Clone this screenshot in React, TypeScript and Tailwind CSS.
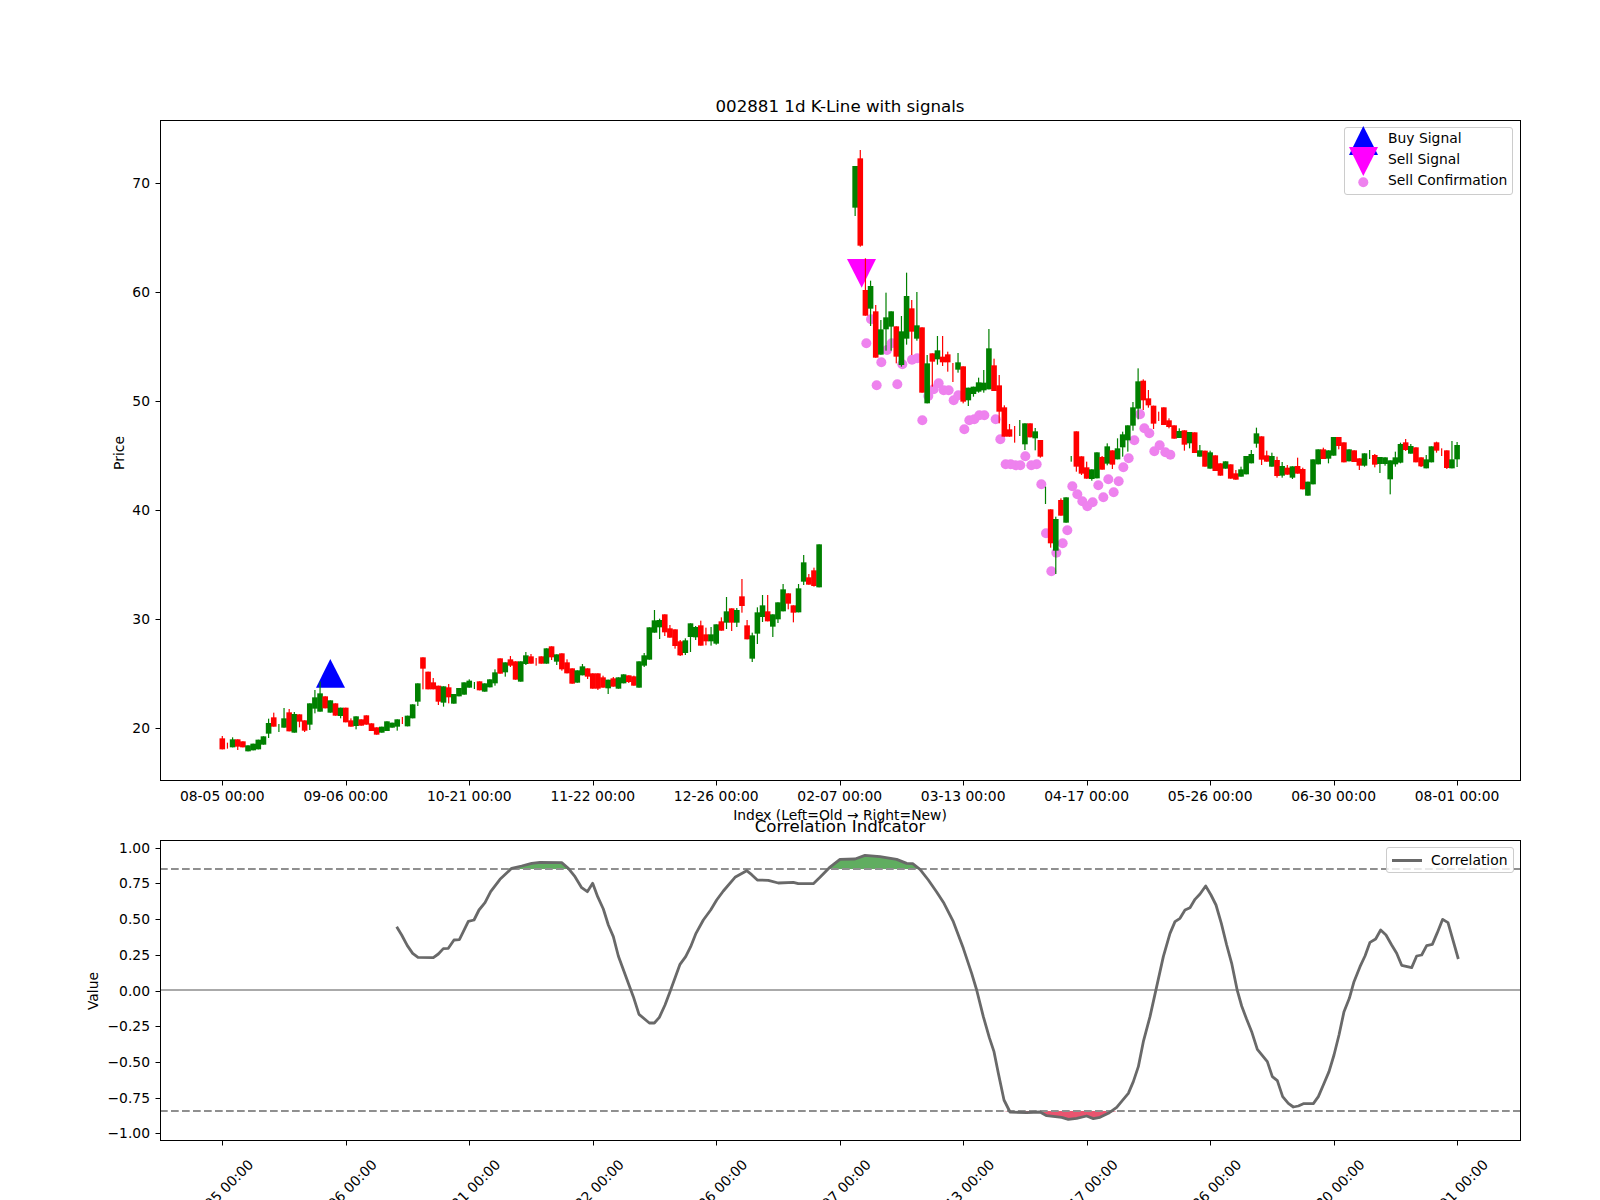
import React from 'react';

type Row = [string, number, number, number, number];

// candle rows read off the chart: colour, wick top, body top, body bottom, wick bottom
const sectionA: Row[] = [
  ['r',348,355,388,388],['r',368,377,377,386],['g',352,358,382,382],['r',358,358,380,390],['r',364,364,382,382],['g',376,376,394,394],['g',371,371,391,391],['g',359,359,388,388],['g',349,349,374,374],['g',296,309,341,354],
  ['r',278,292,320,320],['g',312,324,324,336],['g',264,295,323,323],['r',267,277,334,334],['g',276,282,338,338],['r',283,283,305,322],['r',301,301,332,336],['g',250,250,314,330],['g',210,232,266,280],['g',185,220,275,275],
  ['r',229,229,265,265],['g',241,241,278,278],['r',250,250,287,287],['g',263,263,288,295],['r',263,263,307,307],['r',295,301,320,320],['g',289,289,318,328],['r',298,298,317,317],['r',286,286,314,314],['r',310,310,333,333],
  ['r',322,322,344,344],['g',320,320,338,338],['g',304,304,333,333],['g',308,308,323,323],['g',298,298,320,332],['r',291,301,301,312],['g',287,287,319,319],['g',253,253,295,295],['g',190,190,245,258],['r',112,112,146,208],
  ['r',155,155,208,208],['r',174,187,208,208],['r',197,197,245,255],['g',199,199,248,260],['r',192,202,232,250],['g',222,222,251,251],['g',204,204,229,229],['g',187,187,224,224],['g',178,182,203,203],['g',186,196,196,207],
  ['r',184,184,211,211],
];
const sectionB: Row[] = [
  ['g',460,460,485,485],['g',448,448,472,472],['g',418,427,460,467],['r',385,385,431,431],['g',397,397,427,440],['r',378,388,407,411],['r',394,394,449,449],['g',394,394,455,455],['g',366,376,402,405],['r',372,379,401,401],
  ['r',384,395,395,407],['r',379,379,401,401],['g',355,355,401,401],['r',349,349,382,390],['g',373,373,395,405],['r',370,370,418,422],['r',388,397,430,430],['r',415,415,461,461],['g',421,421,458,458],['g',402,409,436,436],
  ['r',415,415,440,447],['r',430,430,476,476],['r',430,430,476,480],['r',437,442,473,473],['g',449,449,475,492],['r',441,445,470,470],['g',442,442,476,476],['g',433,433,460,460],['r',436,436,456,459],['r',437,439,467,467],
  ['g',394,394,473,473],['g',369,376,407,411],['g',292,292,389,389],['g',240,271,308,308],['g',266,270,292,327],['r',253,253,307,318],['r',285,295,323,323],['r',298,298,348,356],['r',330,334,376,378],['g',325,331,369,375],
  ['g',280,280,321,366],['g',288,291,322,330],['r',272,286,347,347],['r',293,313,334,346],['g',291,313,334,347],['g',283,283,341,344],['r',262,274,302,302],['g',201,244,278,297],['r',235,235,278,303],['g',234,240,278,291],
  ['r',147,199,228,248],['r',270,286,328,328],['g',308,316,386,396],['g',232,247,311,342],['g',195,226,261,276],['r',195,244,274,274],['g',253,253,290,321],['g',217,217,268,279],['g',162,178,244,244],['r',190,190,221,238],
  ['r',226,226,248,277],['g',162,175,247,247],['g',75,97,155,165],['r',132,142,164,164],['r',113,121,168,170],['g',43,43,172,172],
];
const sectionC: Row[] = [
  ['g',108,108,233,258],['r',60,85,347,350],['r',385,480,557,557],['g',452,468,536,588],['r',525,544,683,683],['g',570,598,674,674],['g',488,562,598,662],['g',544,544,590,662],['r',589,589,680,700],['g',558,604,705,710],
  ['g',428,498,626,644],['r',510,535,605,675],['g',486,586,626,632],['r',592,592,788,788],['g',675,700,820,820],['r',670,670,695,770],['g',618,661,688,704],['r',618,680,697,708],['r',665,673,697,725],['r',699,727,727,756],
  ['g',669,697,719,728],['r',709,709,815,820],['g',773,773,811,828],['g',770,770,792,800],['g',743,757,785,788],['g',720,758,781,788],['g',597,655,778,778],['r',686,706,783,783],['r',735,766,845,880],['r',826,832,920,920],
  ['r',882,898,920,920],['r',888,913,913,938],['g',870,894,894,918],['g',880,880,943,960],['r',880,880,922,922],['g',894,904,925,961],
];
const sectionD: Row[] = [
  ['r',240,240,290,293],['g',380,406,406,432],['r',448,448,550,563],['g',470,477,572,642],['r',415,420,467,467],['g',412,412,488,488],['g',288,296,296,305],['r',214,214,320,335],['r',289,289,341,345],['r',305,322,356,356],
  ['g',328,328,357,362],['g',277,277,355,355],['r',288,291,329,329],['g',250,259,311,316],['r',271,271,314,327],['g',235,265,298,298],['g',215,223,262,290],['g',196,196,241,275],['g',126,142,197,212],['g',25,64,146,178],
  ['r',58,62,121,150],['r',90,115,136,143],['r',137,137,191,207],['r',155,169,169,183],['r',142,142,195,195],['r',175,181,201,205],['r',196,196,236,236],['g',205,213,234,234],['r',211,211,254,272],['g',216,216,250,265],
  ['r',217,217,279,279],['g',255,271,290,290],['r',272,272,320,320],['g',272,277,326,326],['r',286,286,333,333],
];
const sectionE: Row[] = [
  ['r',190,190,227,227],['g',184,184,206,206],['r',193,193,236,236],['r',210,220,239,239],['g',200,208,230,230],['g',168,168,223,223],['g',150,162,190,190],['g',83,100,131,143],['r',109,109,179,195],['r',152,166,185,185],
  ['g',158,168,200,200],['r',170,180,228,233],['g',186,198,227,233],['r',195,203,224,224],['g',199,199,233,237],['r',173,198,221,221],['r',203,207,268,268],['g',245,245,287,287],['g',178,178,253,253],['g',148,148,193,193],
  ['r',143,148,177,177],['g',151,151,176,190],['g',111,111,167,167],['r',111,111,138,148],['r',127,127,187,187],['g',148,148,184,184],['r',151,151,186,186],['r',175,175,197,210],['g',160,160,197,200],['g',150,163,163,177],
  ['r',162,165,194,202],['g',171,171,192,219],['g',172,172,192,197],['g',181,181,238,283],['g',155,172,193,200],['g',128,132,188,190],['r',117,127,150,153],['g',132,138,161,161],['r',142,142,187,187],['r',172,172,199,201],
  ['g',165,178,205,205],['g',139,139,187,187],['r',125,127,152,158],['r',145,156,156,168],['r',151,151,204,207],['g',123,178,205,205],['g',126,135,178,201],
];

const candleX = (i: number) => 222.3 + 5.145 * i;
const crisp = (v: number) => Math.round(v) + 0.5;

const candles = [
  { start: 0, y0: 620, rows: sectionA },
  { start: 51, y0: 530, rows: sectionB },
  { start: 123, y0: 130, rows: sectionC },
  { start: 159, y0: 360, rows: sectionD },
  { start: 194, y0: 400, rows: sectionE },
].flatMap(s =>
  s.rows.map((r, k) => ({
    x: candleX(s.start + k),
    color: r[0] === 'r' ? '#ff0000' : '#008000',
    wickTop: s.y0 + r[1] / 3,
    bodyTop: s.y0 + r[2] / 3,
    bodyBottom: s.y0 + r[3] / 3,
    wickBottom: s.y0 + r[4] / 3,
  }))
);

const dots = [
  ...[[153,568],[139,640],[184,697],[201,660],[215,640],[170,766],[232,763],[247,703],[276,689],[292,685],[307,871],[325,798],[341,778],[356,760],[371,781],[386,781],[401,811],[415,796],[433,898],[448,871],[463,868],[478,856],[493,856],[527,868],[541,928]]
    .map(([x, y]) => [820 + x / 3, 130 + y / 3]),
  ...[[77,313],[92,313],[107,316],[121,316],[136,289],[154,316],[170,313],[184,373],[198,520],[214,634],[229,578],[248,550],[262,511],[277,379],[292,403],[307,424],[322,439],[338,427],[355,376],[370,412],[385,358],[401,397],[416,364],[430,322],[446,295],[463,241],[480,163],[493,205],[508,220],[523,274],[539,256],[556,277],[571,284]]
    .map(([x, y]) => [980 + x / 3, 360 + y / 3]),
];

const corrPoints = [
  ...[[1190,380],[1205,405],[1222,437],[1238,460],[1254,472],[1300,473],[1315,462],[1330,446],[1345,445],[1362,420],[1378,419]]
    .map(([x, y]) => [x / 3, 800 + y / 3]),
  ...[[0,295],[25,244],[42,240],[57,210],[75,188],[92,155],[120,118],[155,85],[185,78],[215,70],[240,67],[305,68],[325,85],[345,110],[365,143],[382,155],[398,130],[413,170],[430,207],[445,255],[460,290],[475,348],[505,430],[520,470],[537,523],[568,549],[583,549],[598,532],[615,495],[630,455],[660,373],[677,350],[692,320],[708,280],[730,240],[752,210],[770,180],[790,153],[825,112],[860,92],[875,104],[892,120],[925,121],[955,129],[1000,127],[1015,131],[1060,131]]
    .map(([x, y]) => [460 + x / 3, 840 + y / 3]),
  ...[[60,172],[88,143],[120,118],[165,117],[195,106],[240,110],[290,118],[320,130],[338,131],[360,148],[385,180],[410,216],[432,250],[460,305],[490,385],[515,460],[530,510],[550,590],[568,653],[582,695],[595,760],[612,840],[630,876],[680,878],[720,876],[740,887],[785,892],[805,898],[830,895],[860,888],[880,896],[900,892],[925,880],[950,862],[985,820],[1000,785],[1015,740],[1030,665],[1050,590],[1070,500],[1090,410],[1110,340],[1125,305],[1140,295],[1155,270],[1170,263],[1185,238]]
    .map(([x, y]) => [800 + x / 3, 820 + y / 3]),
  ...[[120,72],[137,48],[153,75],[168,105],[184,160],[200,225],[215,280],[232,362],[245,408],[260,448],[275,485],[292,538],[322,575],[337,620],[352,632],[368,680],[385,700],[400,711],[415,708],[430,701],[460,701],[475,680],[490,645],[507,605],[522,555],[537,495],[552,425],[568,385],[582,335],[600,290],[615,258],[630,217],[647,207],[662,180],[678,195],[695,225],[710,250],[725,286],[755,293],[770,258],[785,255],[800,227],[817,223],[832,188],[848,148],[864,158],[895,267]]
    .map(([x, y]) => [1160 + x / 3, 870 + y / 3]),
];

const toPoints = (pts: number[][]) => pts.map(p => p.join(',')).join(' ');

const tickIndexes = [0, 24, 48, 72, 96, 120, 144, 168, 192, 216, 240];
const dateLabels = ['08-05 00:00', '09-06 00:00', '10-21 00:00', '11-22 00:00', '12-26 00:00', '02-07 00:00', '03-13 00:00', '04-17 00:00', '05-26 00:00', '06-30 00:00', '08-01 00:00'];
const priceTicks = [20, 30, 40, 50, 60, 70];
const valueTicks = ['1.00', '0.75', '0.50', '0.25', '0.00', '−0.25', '−0.50', '−0.75', '−1.00'];

const priceY = (p: number) => 727.9 - (p - 20) * 10.9;
const valueY = (i: number) => 847.7 + i * 35.7;

const Candles = () => (
  <g>
    {candles.map((c, i) => (
      <g key={i} fill={c.color}>
        <rect x={c.x - 0.6} y={c.wickTop} width={1.2} height={c.wickBottom - c.wickTop} />
        {c.bodyBottom > c.bodyTop && <rect x={c.x - 2.8} y={c.bodyTop} width={5.6} height={c.bodyBottom - c.bodyTop} />}
      </g>
    ))}
  </g>
);

const PriceChart = () => (
  <svg className="block w-[1600px] h-[696px] overflow-visible" viewBox="0 120 1600 696" fontSize="13.89">
    {dots.map(([x, y], i) => (
      <circle key={i} cx={x} cy={y} r={5} fill="#ee82ee" />
    ))}
    <polygon points="330.3,659 316,687.7 345,687.7" fill="#0000ff" />
    <polygon points="847,259 876,259 861.7,287.7" fill="#ff00ff" />
    <Candles />
    <rect x={160.5} y={120.5} width={1360} height={660} fill="none" stroke="#000" />
    {tickIndexes.map((t, i) => (
      <g key={t}>
        <line x1={crisp(candleX(t))} x2={crisp(candleX(t))} y1={781} y2={785.5} stroke="#000" />
        <text x={candleX(t)} y={801} textAnchor="middle">{dateLabels[i]}</text>
      </g>
    ))}
    {priceTicks.map(p => (
      <g key={p}>
        <line x1={155.5} x2={160} y1={crisp(priceY(p))} y2={crisp(priceY(p))} stroke="#000" />
        <text x={150} y={priceY(p) + 5} textAnchor="end">{p}</text>
      </g>
    ))}
    <text x={840} y={820} textAnchor="middle">Index (Left=Old → Right=New)</text>
    <text transform="translate(124 453) rotate(-90)" textAnchor="middle">Price</text>
  </svg>
);

const CorrelationChart = () => (
  <svg className="block w-[1600px] h-[360px] overflow-visible" viewBox="0 840 1600 360" fontSize="13.89">
    <line x1={160} x2={1520} y1={990} y2={990} stroke="#aaaaaa" strokeWidth={2} />
    <polygon points={toPoints(corrPoints.map(([x, y]) => [x, Math.min(y, 869)]))} fill="#60ad60" />
    <polygon points={toPoints(corrPoints.map(([x, y]) => [x, Math.max(y, 1111)]))} fill="#e9546f" />
    <line x1={160} x2={1520} y1={869} y2={869} stroke="#8f8f8f" strokeWidth={2} strokeDasharray="7.7 3.3" />
    <line x1={160} x2={1520} y1={1111} y2={1111} stroke="#8f8f8f" strokeWidth={2} strokeDasharray="7.7 3.3" />
    <polyline points={toPoints(corrPoints)} fill="none" stroke="#696969" strokeWidth={2.8} strokeLinejoin="round" />
    <rect x={160.5} y={840.5} width={1360} height={300} fill="none" stroke="#000" />
    {tickIndexes.map((t, i) => (
      <g key={t}>
        <line x1={crisp(candleX(t))} x2={crisp(candleX(t))} y1={1141} y2={1145.5} stroke="#000" />
        <text transform={`translate(${candleX(t) - 1.5} 1192) rotate(-45)`} textAnchor="middle" dominantBaseline="central">{dateLabels[i]}</text>
      </g>
    ))}
    {valueTicks.map((v, i) => (
      <g key={v}>
        <line x1={155.5} x2={160} y1={crisp(valueY(i))} y2={crisp(valueY(i))} stroke="#000" />
        <text x={150} y={valueY(i) + 5} textAnchor="end">{v}</text>
      </g>
    ))}
    <text transform="translate(98 991) rotate(-90)" textAnchor="middle">Value</text>
  </svg>
);

const PriceLegend = () => (
  <div className="absolute left-[1344px] top-[7px] flex h-[68px] w-[169px] rounded-[3px] border border-[#cccccc] bg-white/80 text-[13.89px] leading-[21px]">
    <svg className="h-[67px] w-[43px] shrink-0 overflow-visible" viewBox="1345 128 43 67">
      <polygon points="1363.3,126 1349,155 1378,155" fill="#0000ff" />
      <polygon points="1349,147 1378,147 1363.3,176" fill="#ff00ff" />
      <circle cx={1363.3} cy={182.3} r={5} fill="#ee82ee" />
    </svg>
    <div className="flex flex-col whitespace-nowrap">
      <span>Buy Signal</span>
      <span>Sell Signal</span>
      <span>Sell Confirmation</span>
    </div>
  </div>
);

const CorrelationLegend = () => (
  <div className="absolute left-[1386px] top-[7px] flex h-[26px] w-[128px] items-center rounded-[3px] border border-[#cccccc] bg-white/80 pl-[5px] text-[13.89px]">
    <span className="h-[3px] w-[30px] bg-[#696969]" />
    <span className="ml-[9px]">Correlation</span>
  </div>
);

export default function App() {
  return (
    <div className="h-[1200px] w-[1600px] overflow-hidden bg-white pt-[97px] text-black [font-family:'DejaVu_Sans',sans-serif]">
      <div className="mb-[3px] ml-[160px] h-5 w-[1360px] text-center text-[16.67px] leading-5">002881 1d K-Line with signals</div>
      <div className="relative h-[696px]">
        <PriceChart />
        <PriceLegend />
      </div>
      <div className="ml-[160px] h-6 w-[1360px] pt-px text-center text-[16.67px] leading-5">Correlation Indicator</div>
      <div className="relative h-[360px]">
        <CorrelationChart />
        <CorrelationLegend />
      </div>
    </div>
  );
}
